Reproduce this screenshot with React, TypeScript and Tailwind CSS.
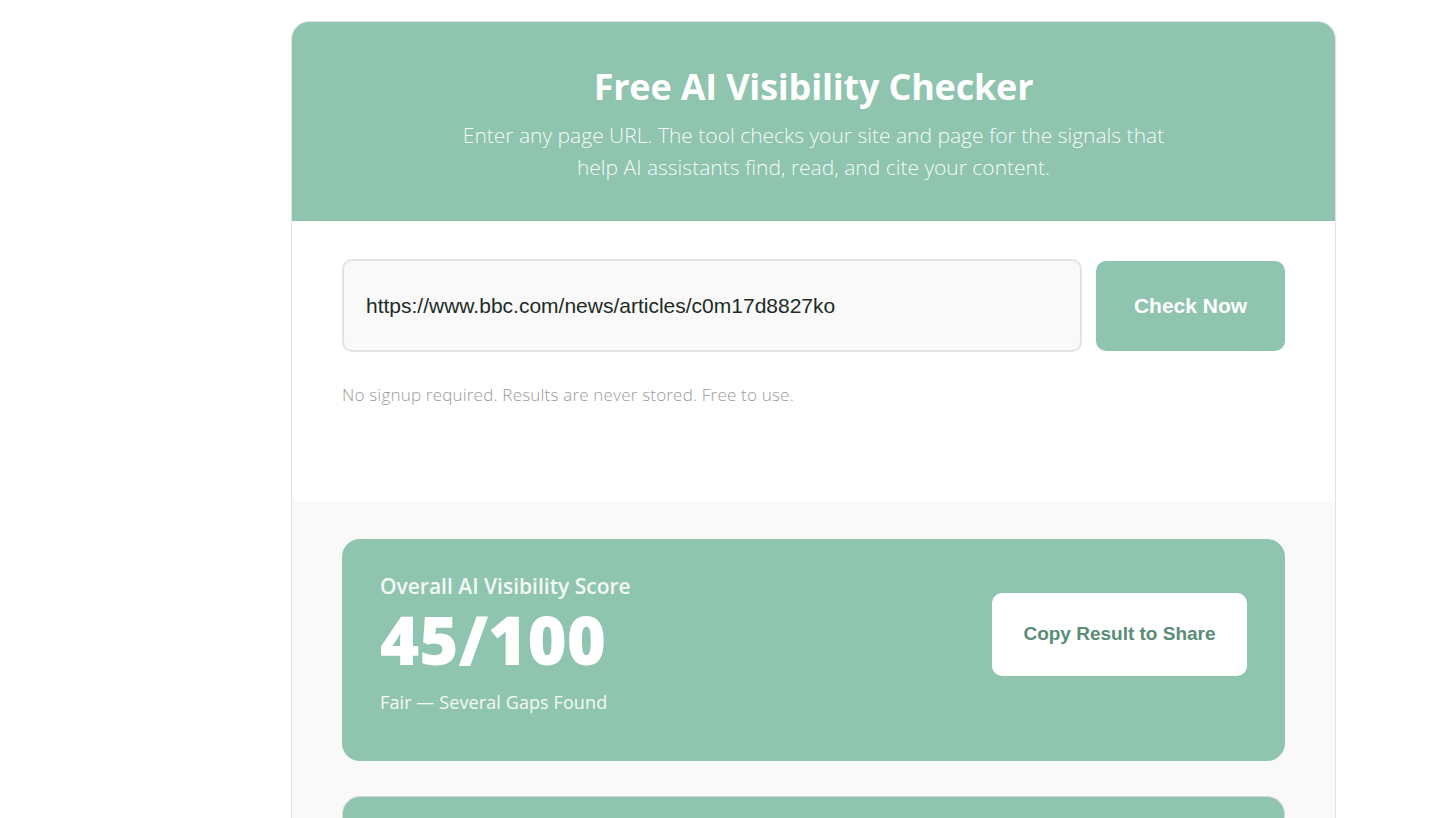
import React from "react";

export default function App() {
  const humanist = { fontFamily: '"Open Sans", "Noto Sans", sans-serif' };
  const arial = { fontFamily: '"Liberation Sans", Arial, sans-serif' };
  return (
    <div className="min-h-screen bg-white pl-[291px] pt-[21px]" style={humanist}>
      <div className="w-[1045px] overflow-hidden rounded-t-[18px] border border-[#e2e2e2] bg-white">
        <div className="-mx-px -mt-px flex h-[200px] flex-col items-center bg-[#8fc4ae] pt-[44px] text-center text-white">
          <h1 className="text-[36px] font-bold leading-[44px] tracking-[-0.2px]">Free AI Visibility Checker</h1>
          <p className="mt-[10px] w-[705px] text-[21px] font-light leading-[32px] text-white/95">
            Enter any page URL. The tool checks your site and page for the signals that help AI assistants find, read, and cite your content.
          </p>
        </div>

        <div className="px-[50px] pt-[38px] pb-[94px]">
          <div className="flex items-center gap-[14px]">
            <div className="flex h-[93px] flex-1 items-center rounded-[10px] border-2 border-[#e3e3e3] bg-[#f9f9f9] px-[22px]">
              <span className="text-[21px] text-[#1c2b25]" style={arial}>https://www.bbc.com/news/articles/c0m17d8827ko</span>
            </div>
            <button className="flex h-[90px] w-[189px] items-center justify-center rounded-[10px] bg-[#8fc4ae] text-[21px] font-bold text-white" style={arial}>
              Check Now
            </button>
          </div>
          <p className="mt-[31px] text-[17px] font-light leading-[24px] tracking-[0.2px] text-[#9a9a9a]">
            No signup required. Results are never stored. Free to use.
          </p>
        </div>

        <div className="flex flex-col gap-[35px] bg-[#f9f9f9] px-[50px] pt-[38px] pb-[40px]">
          <div className="flex h-[222px] items-start justify-between rounded-[18px] bg-[#8fc4ae] px-[38px] pt-[34px] text-white">
            <div className="flex flex-col">
              <span className="text-[21px] font-semibold leading-[26px] text-white/90">Overall AI Visibility Score</span>
              <span className="mt-[7px] text-[67px] font-extrabold leading-[66px]">45/100</span>
              <span className="mt-[17px] text-[18px] leading-[26px] tracking-[0.1px] text-white/90">Fair — Several Gaps Found</span>
            </div>
            <button className="mt-[20px] flex h-[83px] w-[255px] items-center justify-center rounded-[10px] bg-white text-[19px] font-bold text-[#5a8c78]" style={arial}>
              Copy Result to Share
            </button>
          </div>
          <div className="h-[222px] rounded-[18px] border border-[#d6dcd9] bg-[#8fc4ae]" />
        </div>
      </div>
    </div>
  );
}
